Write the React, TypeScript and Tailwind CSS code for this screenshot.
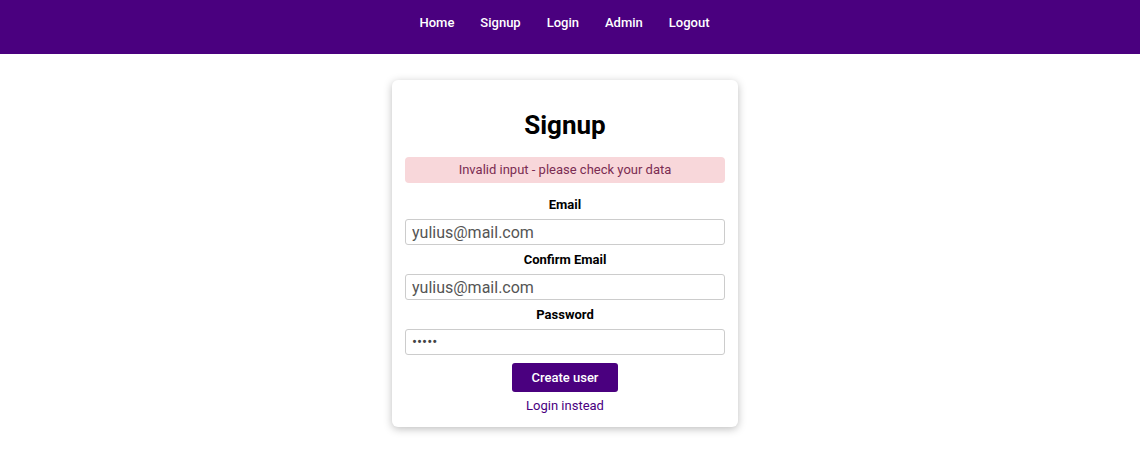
import React from "react";

export default function App() {
  const links = ["Home", "Signup", "Login", "Admin", "Logout"];
  return (
    <div className="min-h-[466px] bg-white font-['Roboto',sans-serif]">
      <nav className="h-[54px] w-full bg-[#4a007f]">
        <ul className="flex justify-center gap-[26px] pr-[11px] pt-[15px]">
          {links.map((l) => (
            <li key={l} className="text-[13px] leading-[16px] font-medium text-white">
              {l}
            </li>
          ))}
        </ul>
      </nav>
      <div className="flex justify-center pr-[10px] pt-[26px]">
        <div className="w-[346px] rounded-[6px] bg-white px-[13px] pt-[13px] pb-[13px] shadow-[0_2px_8px_rgba(0,0,0,0.26)]">
          <h1 className="my-[17px] text-center text-[26px] leading-[30px] font-bold text-black">Signup</h1>
          <div className="flex h-[26px] items-center justify-center rounded-[4px] bg-[#f8d7da] text-[13px] text-[#7b2c52]">
            Invalid input - please check your data
          </div>
          <div className="mt-[7px]">
            <label className="block h-[29px] text-center text-[13px] leading-[29px] font-bold text-black">Email</label>
            <input
              readOnly
              value="yulius@mail.com"
              className="block h-[26px] w-full rounded-[3px] border border-[#ccc] px-[6px] text-[16px] text-[#555] outline-none"
            />
            <label className="block h-[29px] text-center text-[13px] leading-[29px] font-bold text-black">Confirm Email</label>
            <input
              readOnly
              value="yulius@mail.com"
              className="block h-[26px] w-full rounded-[3px] border border-[#ccc] px-[6px] text-[16px] text-[#555] outline-none"
            />
            <label className="block h-[29px] text-center text-[13px] leading-[29px] font-bold text-black">Password</label>
            <input
              readOnly
              type="password"
              value="12345"
              className="block h-[26px] w-full rounded-[3px] border border-[#ccc] px-[6px] text-[15px] text-[#444] outline-none"
            />
          </div>
          <div className="mt-[8px] flex justify-center">
            <button className="h-[29px] w-[106px] rounded-[3px] bg-[#4a007f] text-[13px] font-medium text-white">
              Create user
            </button>
          </div>
          <div className="mt-[6px] text-center text-[13px] leading-[16px] text-[#4a007f]">Login instead</div>
        </div>
      </div>
    </div>
  );
}
